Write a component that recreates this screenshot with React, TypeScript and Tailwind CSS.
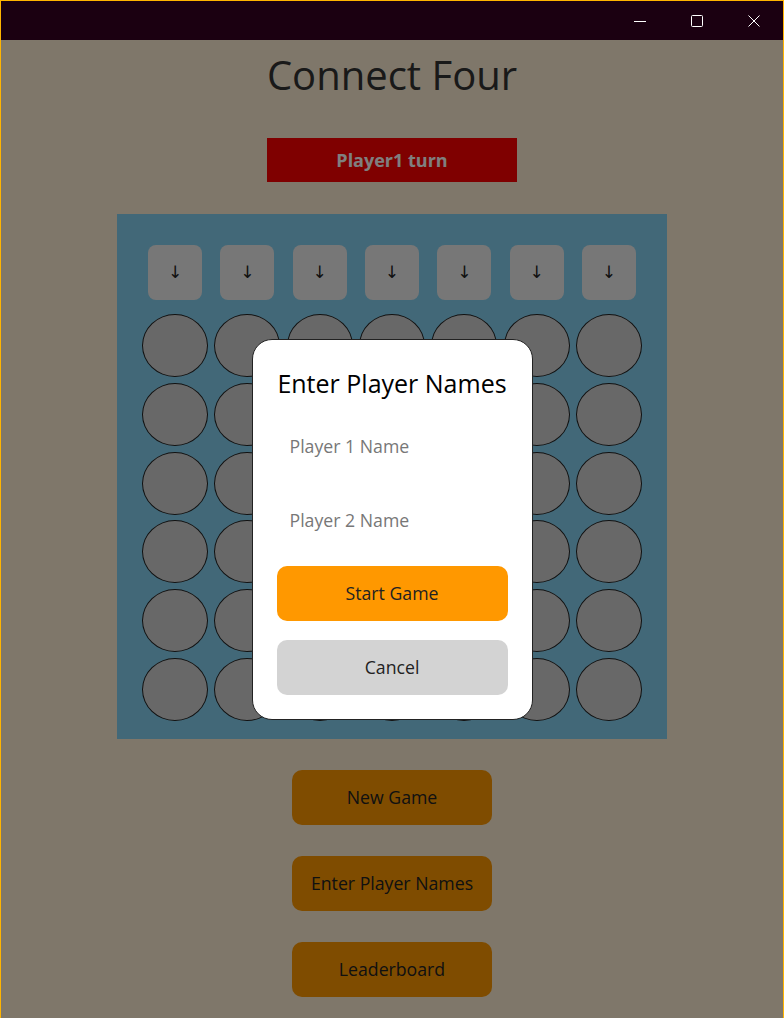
import React from "react";

const font = { fontFamily: '"Open Sans", "Noto Sans", sans-serif' };
const arrowFont = { fontFamily: '"DejaVu Sans", sans-serif' };

function TitleBar() {
  return (
    <div className="h-[39px] bg-[#1b0011] flex justify-end items-center shrink-0">
      <div className="w-[57px] h-full flex items-center justify-center">
        <svg width="12" height="12" viewBox="0 0 12 12">
          <path d="M0 6.5 H12" stroke="#fff" strokeWidth="1" />
        </svg>
      </div>
      <div className="w-[57px] h-full flex items-center justify-center">
        <svg width="12" height="12" viewBox="0 0 12 12">
          <rect x="0.5" y="0.5" width="11" height="11" rx="1" fill="none" stroke="#fff" strokeWidth="1" />
        </svg>
      </div>
      <div className="w-[57px] h-full flex items-center justify-center mr-[1px]">
        <svg width="12" height="12" viewBox="0 0 12 12">
          <path d="M0.5 0.5 L11.5 11.5 M11.5 0.5 L0.5 11.5" stroke="#fff" strokeWidth="1" />
        </svg>
      </div>
    </div>
  );
}

function Board() {
  const cols = Array.from({ length: 7 });
  const cells = Array.from({ length: 42 });
  return (
    <div className="mt-[32px] w-[550px] h-[525px] bg-[#84d0f0] pt-[31px] px-[25px]">
      <div className="grid grid-cols-7 gap-x-[6.33px]">
        {cols.map((_, i) => (
          <div key={i} className="flex justify-center">
            <button
              className="w-[54px] h-[55px] rounded-[8px] bg-[#eeeeee] text-[#222] text-[17px] flex items-center justify-center"
              style={arrowFont}
            >
              ↓
            </button>
          </div>
        ))}
      </div>
      <div className="mt-[14px] grid grid-cols-7 gap-x-[6.33px] gap-y-[5.8px]">
        {cells.map((_, i) => (
          <div key={i} className="h-[63px] rounded-[50%] bg-[#d0d0d0] border border-[#222]" />
        ))}
      </div>
    </div>
  );
}

function Modal() {
  return (
    <div className="absolute inset-0 bg-black/50 flex items-center justify-center">
      <div className="w-[281px] h-[381px] mt-[1px] bg-white rounded-[20px] border border-[#222] px-[24px] pt-[27px] flex flex-col">
        <div className="text-[25px] leading-[33px] text-black text-center whitespace-nowrap">Enter Player Names</div>
        <input
          placeholder="Player 1 Name"
          className="mt-[18px] h-[55px] w-full px-[13px] text-[17.7px] text-[#333] placeholder:text-[#777] outline-none bg-transparent"
          style={font}
        />
        <input
          placeholder="Player 2 Name"
          className="mt-[19px] h-[55px] w-full px-[13px] text-[17.7px] text-[#333] placeholder:text-[#777] outline-none bg-transparent"
          style={font}
        />
        <button className="mt-[19px] h-[55px] w-full rounded-[10px] bg-[#ff9800] text-[17.7px] text-[#222]" style={font}>
          Start Game
        </button>
        <button className="mt-[19px] h-[55px] w-full rounded-[10px] bg-[#d3d3d3] text-[17.7px] text-[#222]" style={font}>
          Cancel
        </button>
      </div>
    </div>
  );
}

export default function App() {
  return (
    <div className="w-[784px] h-[1018px] flex flex-col border-x border-t border-[#ffb400] overflow-hidden" style={font}>
      <TitleBar />
      <div className="relative flex-1 bg-[#feeed4] flex flex-col items-center">
        <h1 className="mt-[10px] text-[40px] leading-[50px] text-[#333]">Connect Four</h1>
        <div className="mt-[38px] w-[250px] h-[44px] bg-[#ff0000] text-white font-bold text-[18px] flex items-center justify-center">
          Player1 turn
        </div>
        <Board />
        <div className="mt-[31px] flex flex-col gap-[31px]">
          {["New Game", "Enter Player Names", "Leaderboard"].map((t) => (
            <button key={t} className="w-[200px] h-[55px] rounded-[10px] bg-[#ff9800] text-[17.7px] text-[#222]" style={font}>
              {t}
            </button>
          ))}
        </div>
        <Modal />
      </div>
    </div>
  );
}
